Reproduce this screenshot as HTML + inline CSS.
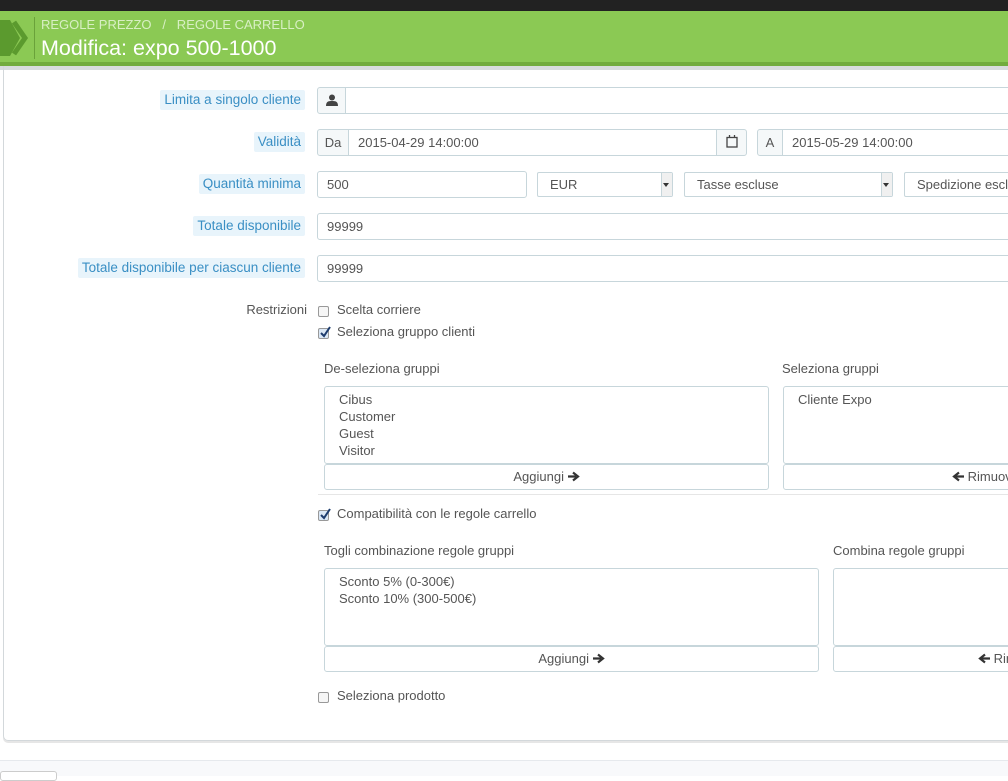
<!DOCTYPE html>
<html><head><meta charset="utf-8"><style>
*{box-sizing:border-box}
body{margin:0;width:1008px;height:776px;overflow:hidden;background:#fff;font-family:"Liberation Sans",sans-serif;font-size:13px;color:#555;position:relative}
.a{position:absolute}
.lbl{position:absolute;right:703px;height:20px;line-height:20px;padding:0 4px;background:#e8f4fb;color:#3a8fc4;border-radius:2px;font-size:13.5px;white-space:nowrap}
.in{position:absolute;height:27px;border:1px solid #c7d6db;border-radius:3px;background:#fff;line-height:25px;padding-left:9px;color:#555}
.addon{position:absolute;height:27px;border:1px solid #c7d6db;background:#f5f8f9;line-height:25px;text-align:center;color:#555}
.sel{position:absolute;height:25px;border:1px solid #c7d6db;border-radius:2px;line-height:23px;padding-left:12px;color:#555}
.sel:after{content:"";position:absolute;right:0;top:0;width:10px;height:23px;background:#f0f0f0;border-left:1px solid #c7d6db}
.sel i{position:absolute;right:3px;top:10px;border:3px solid transparent;border-top:4px solid #333;z-index:2}
.cb{position:absolute;width:11px;height:11px;border:1px solid #999;border-radius:2px;background:#f6f6f6}
.box{position:absolute;border:1px solid #c7d6db;border-radius:3px;background:#fff;padding:4px 14px;line-height:17px;color:#555}
.btn{position:absolute;height:26px;border:1px solid #c7d6db;border-radius:3px;background:#fff;line-height:24px;text-align:center;color:#555;white-space:nowrap}
svg{vertical-align:-1px}
</style></head><body>
<div class="a" style="left:0;top:0;width:1008px;height:11px;background:#222"></div>
<div class="a" style="left:0;top:11px;width:1008px;height:53px;background:#8bc954"></div>
<div class="a" style="left:0;top:62px;width:1008px;height:4px;background:#72ac3e"></div>
<div class="a" style="left:0;top:66px;width:1008px;height:4px;background:#d8dcde"></div>
<svg class="a" style="left:0;top:18px" width="30" height="40"><path d="M0 2 L10 2 L20 20 L10 38 L0 38 Z" fill="#5b9a2e"/><path d="M14 4 L25 20 L14 36" fill="none" stroke="#5b9a2e" stroke-width="5"/></svg>
<div class="a" style="left:34px;top:17px;width:1px;height:42px;background:#6aa23a"></div>
<div class="a" style="left:41px;top:17px;color:#d8efc4;font-size:13px">REGOLE PREZZO &nbsp; / &nbsp; REGOLE CARRELLO</div>
<div class="a" style="left:41px;top:36px;color:#fff;font-size:21.5px">Modifica: expo 500-1000</div>

<div class="a" style="left:3px;top:66px;width:1010px;height:675px;border:1px solid #d3d8db;border-top:none;border-radius:0 0 5px 5px;box-shadow:0 2px 0 #e6e6e6"></div>
<div class="a" style="left:0;top:760px;width:1008px;height:16px;background:#f8f9fb;border-top:1px solid #e6e9ed"></div>
<div class="a" style="left:0;top:771px;width:57px;height:10px;border:1px solid #ccc;border-radius:3px;background:#fff"></div>

<div class="lbl" style="top:90px">Limita a singolo cliente</div>
<div class="addon" style="left:317px;top:87px;width:29px;border-radius:3px 0 0 3px"><svg width="12" height="12" viewBox="0 0 12 12"><circle cx="6" cy="3.5" r="3" fill="#444"/><path d="M0 12 C0 7 3 7 6 7 C9 7 12 7 12 12Z" fill="#444"/></svg></div>
<div class="in" style="left:345px;top:87px;width:680px;border-radius:0"></div>

<div class="lbl" style="top:132px">Validità</div>
<div class="addon" style="left:317px;top:129px;width:32px;border-radius:3px 0 0 3px">Da</div>
<div class="in" style="left:348px;top:129px;width:369px;border-radius:0">2015-04-29 14:00:00</div>
<div class="addon" style="left:716px;top:129px;width:31px;border-radius:0 3px 3px 0"><svg width="12" height="13"><rect x="1" y="2.5" width="10" height="9.5" fill="none" stroke="#444" stroke-width="1.3"/><path d="M3.5 0v3M8.5 0v3" stroke="#444" stroke-width="1.3"/></svg></div>
<div class="addon" style="left:757px;top:129px;width:26px;border-radius:3px 0 0 3px">A</div>
<div class="in" style="left:782px;top:129px;width:240px;border-radius:0">2015-05-29 14:00:00</div>

<div class="lbl" style="top:174px">Quantità minima</div>
<div class="in" style="left:317px;top:171px;width:210px">500</div>
<div class="sel" style="left:537px;top:172px;width:136px">EUR<i></i></div>
<div class="sel" style="left:684px;top:172px;width:209px">Tasse escluse<i></i></div>
<div class="sel" style="left:904px;top:172px;width:120px;overflow:hidden;white-space:nowrap">Spedizione escluse</div>

<div class="lbl" style="top:216px">Totale disponibile</div>
<div class="in" style="left:317px;top:213px;width:705px">99999</div>
<div class="lbl" style="top:258px">Totale disponibile per ciascun cliente</div>
<div class="in" style="left:317px;top:255px;width:705px">99999</div>

<div class="a" style="right:701px;top:302px;font-size:13px;color:#555">Restrizioni</div>
<div class="cb" style="left:318px;top:306px"></div><div class="a" style="left:337px;top:302px">Scelta corriere</div>
<div class="cb" style="left:318px;top:328px;background:#dbe8f6"></div><svg class="a" style="left:319px;top:325px" width="12" height="14"><path d="M2 8 L5 11 L11 2" fill="none" stroke="#1d3c6e" stroke-width="2"/></svg>
<div class="a" style="left:337px;top:324px">Seleziona gruppo clienti</div>

<div class="a" style="left:324px;top:361px">De-seleziona gruppi</div>
<div class="a" style="left:782px;top:361px">Seleziona gruppi</div>
<div class="box" style="left:324px;top:386px;width:445px;height:78px">Cibus<br>Customer<br>Guest<br>Visitor</div>
<div class="box" style="left:783px;top:386px;width:240px;height:78px">Cliente Expo</div>
<div class="btn" style="left:324px;top:464px;width:445px">Aggiungi <svg width="12" height="11"><path d="M0 5.5H8M5 1.5L10 5.5L5 9.5" fill="none" stroke="#333" stroke-width="2.2"/></svg></div>
<div class="btn" style="left:783px;top:464px;width:240px;text-align:left;padding-left:168px"><svg width="12" height="11"><path d="M12 5.5H3M7 1.5L2 5.5L7 9.5" fill="none" stroke="#333" stroke-width="2.2"/></svg> Rimuovi</div>
<div class="a" style="left:318px;top:494px;width:700px;height:1px;background:#e6e6e6"></div>

<div class="cb" style="left:318px;top:510px;background:#dbe8f6"></div><svg class="a" style="left:319px;top:507px" width="12" height="14"><path d="M2 8 L5 11 L11 2" fill="none" stroke="#1d3c6e" stroke-width="2"/></svg>
<div class="a" style="left:337px;top:506px">Compatibilità con le regole carrello</div>
<div class="a" style="left:324px;top:543px">Togli combinazione regole gruppi</div>
<div class="a" style="left:833px;top:543px">Combina regole gruppi</div>
<div class="box" style="left:324px;top:568px;width:495px;height:78px">Sconto 5% (0-300€)<br>Sconto 10% (300-500€)</div>
<div class="box" style="left:833px;top:568px;width:190px;height:78px"></div>
<div class="btn" style="left:324px;top:646px;width:495px">Aggiungi <svg width="12" height="11"><path d="M0 5.5H8M5 1.5L10 5.5L5 9.5" fill="none" stroke="#333" stroke-width="2.2"/></svg></div>
<div class="btn" style="left:833px;top:646px;width:190px;text-align:left;padding-left:144px"><svg width="12" height="11"><path d="M12 5.5H3M7 1.5L2 5.5L7 9.5" fill="none" stroke="#333" stroke-width="2.2"/></svg> Rimuovi</div>

<div class="cb" style="left:318px;top:692px"></div><div class="a" style="left:337px;top:688px">Seleziona prodotto</div>
</body></html>
